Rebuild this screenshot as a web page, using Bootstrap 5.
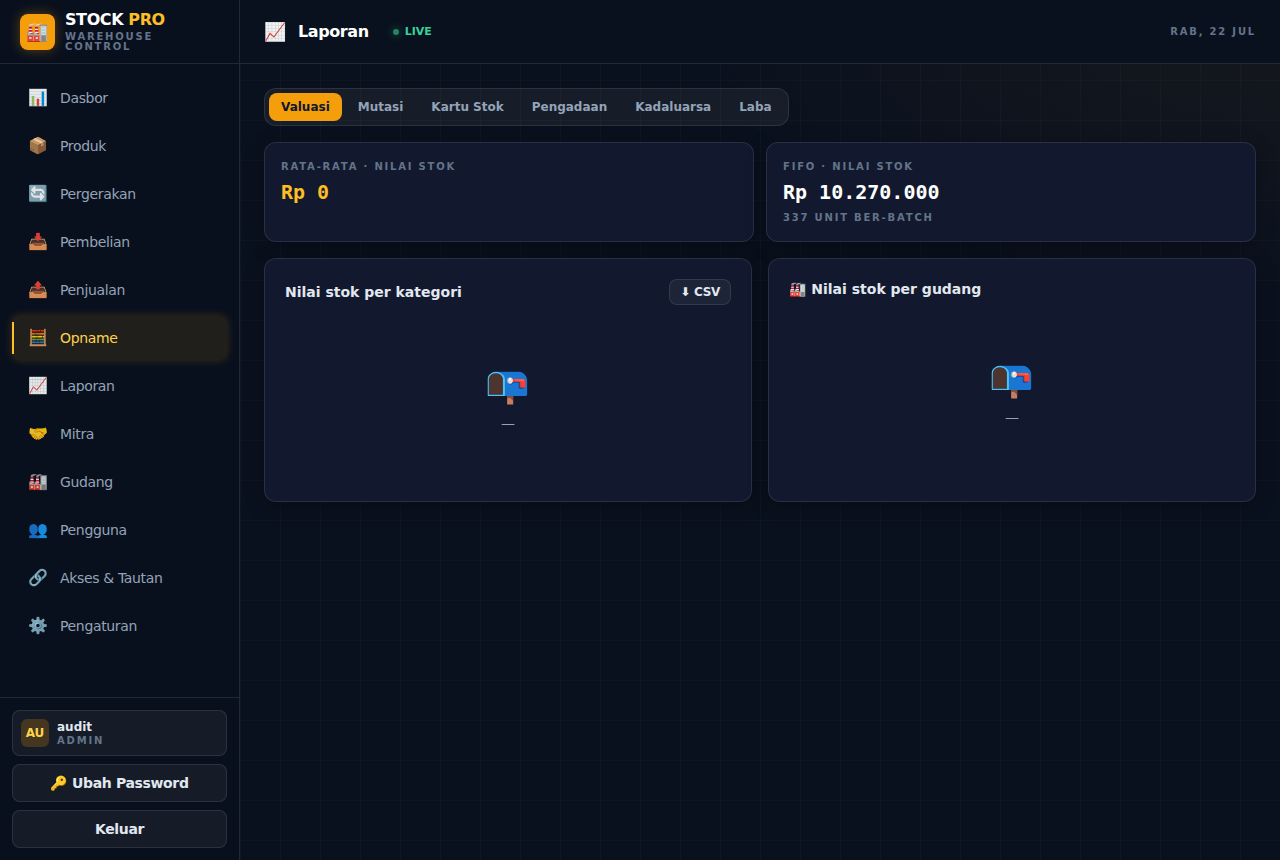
<!DOCTYPE html>
<html lang="id" data-bs-theme="dark">
<head>
<meta charset="utf-8">
<meta name="viewport" content="width=device-width, initial-scale=1">
<title>Laporan · Stock Pro</title>
<link rel="stylesheet" href="https://cdn.jsdelivr.net/npm/bootstrap@5.3.0/dist/css/bootstrap.min.css">
<style>
  :root {
    --line: rgba(255, 255, 255, .1);
    --glass: rgba(255, 255, 255, .05);
    --muted: #64748b;
    --soft: #94a3b8;
    --text: #e2e8f0;
    --amber: #f59e0b;
    --amber-light: #fbbf24;
  }
  body {
    font-family: "DejaVu Sans", "Noto Color Emoji", sans-serif;
    font-size: 14px;
    line-height: 20px;
    color: var(--text);
    background-color: #0a111e;
    background-image:
      linear-gradient(rgba(255, 255, 255, .02) 1px, transparent 1px),
      linear-gradient(90deg, rgba(255, 255, 255, .02) 1px, transparent 1px),
      radial-gradient(600px 300px at 100% 0, rgba(245, 158, 11, .05), transparent);
    background-size: 40px 40px, 40px 40px, auto;
  }
  .sidebar { width: 240px; background: #09101d; border-right: 1px solid var(--line); }
  .brand { height: 64px; padding: 0 20px; gap: 10px; border-bottom: 1px solid var(--line); }
  .brand-logo {
    width: 35px; height: 36px; border-radius: 8px; background: var(--amber);
    font-size: 18px; box-shadow: 0 0 12px rgba(245, 158, 11, .35);
  }
  .brand-name { font-size: 16px; line-height: 16px; font-weight: 700; color: #fff; letter-spacing: -.025em; }
  .brand-name span { color: var(--amber-light); }
  .eyebrow { font-size: 10px; line-height: 16px; font-weight: 700; letter-spacing: .18em; text-transform: uppercase; color: var(--muted); }
  .brand .eyebrow { line-height: 10px; margin-top: 4px; }
  .menu { padding: 12px; gap: 4px; }
  .menu .nav-link {
    display: flex; align-items: center; gap: 12px; height: 44px; padding: 0 16px;
    border-radius: 8px; color: var(--soft); position: relative; letter-spacing: -.025em;
  }
  .menu .nav-link.active { color: #fcd34d; background: #211f1c; box-shadow: 0 0 8px rgba(245, 158, 11, .22); }
  .menu .nav-link.active::before {
    content: ""; position: absolute; left: 0; top: 6px; bottom: 6px; width: 2px; background: var(--amber-light);
  }
  .menu-icon { width: 20px; font-size: 16px; line-height: 20px; text-align: center; opacity: .9; }
  .account { padding: 12px; gap: 8px; border-top: 1px solid var(--line); }
  .user-box { height: 46px; padding: 0 8px; gap: 8px; border: 1px solid var(--line); border-radius: 8px; background: var(--glass); }
  .avatar { width: 28px; height: 28px; border-radius: 6px; background: #44361f; color: #fcd34d; font-size: 12px; font-weight: 700; }
  .user-name { font-size: 12px; line-height: 14px; font-weight: 700; }
  .user-box .eyebrow { line-height: 13px; }
  .btn-glass {
    --bs-btn-color: var(--text); --bs-btn-bg: rgba(255, 255, 255, .05); --bs-btn-border-color: rgba(255, 255, 255, .1);
    --bs-btn-hover-color: #fff; --bs-btn-hover-bg: rgba(255, 255, 255, .1); --bs-btn-hover-border-color: rgba(255, 255, 255, .2);
    --bs-btn-font-size: 14px; --bs-btn-font-weight: 700; --bs-btn-line-height: 20px;
    --bs-btn-padding-y: 8px; --bs-btn-padding-x: 16px; --bs-btn-border-radius: 8px;
    letter-spacing: -.025em;
  }
  .btn-csv { --bs-btn-font-size: 12px; --bs-btn-line-height: 16px; --bs-btn-padding-y: 4px; --bs-btn-padding-x: 10px; }
  .topbar { height: 64px; padding: 0 24px; background: #0a111e; border-bottom: 1px solid var(--line); }
  .topbar h1 { font-size: 16px; line-height: 24px; font-weight: 700; color: #fff; margin: 0; letter-spacing: -.025em; }
  .topbar-icon { font-size: 18px; line-height: 24px; width: 22px; opacity: .95; }
  .live { color: #34d399; font-size: 11px; line-height: 16px; font-weight: 700; gap: 6px; }
  .live-dot { width: 6px; height: 6px; border-radius: 50%; background: #238562; box-shadow: 0 0 8px rgba(16, 185, 129, .6); }
  .content { padding: 24px; gap: 16px; }
  .tabs { padding: 4px; gap: 4px; border: 1px solid var(--line); border-radius: 12px; background: var(--glass); }
  .tabs .nav-link { padding: 6px 12px; border: 0; border-radius: 8px; background: transparent; font-size: 12px; line-height: 16px; font-weight: 700; color: var(--soft); }
  .tabs .nav-link.active { background: var(--amber); color: #0f172a; }
  .panel { background: #12192e; border: 1px solid var(--line); border-radius: 12px; box-shadow: 0 4px 20px rgba(0, 0, 0, .3); }
  .stats { --bs-gutter-x: 12px; }
  .panels { --bs-gutter-x: 16px; }
  .stat-box { padding: 16px 16px 15px; }
  .stat-value { font-family: "DejaVu Sans Mono", monospace; font-size: 20px; line-height: 28px; font-weight: 700; color: #fff; margin: 3px 0 4px; }
  .stat-value.accent { color: var(--amber-light); }
  .chart-box { padding: 20px; min-height: 244px; }
  .chart-box h2 { font-size: 14px; line-height: 20px; font-weight: 700; margin: 0; color: var(--text); }
  .empty { padding: 60px 0 48px; color: var(--soft); }
  .empty-icon { font-size: 36px; line-height: 40px; margin-bottom: 8px; }
</style>
</head>
<body>
<div class="d-flex min-vh-100">
  <aside class="sidebar d-flex flex-column flex-shrink-0">
    <div class="brand d-flex align-items-center">
      <div class="brand-logo d-flex align-items-center justify-content-center flex-shrink-0">🏭</div>
      <div>
        <div class="brand-name">STOCK <span>PRO</span></div>
        <div class="eyebrow">Warehouse Control</div>
      </div>
    </div>
    <nav class="menu nav flex-column flex-nowrap flex-grow-1" aria-label="Menu utama">
      <a class="nav-link" href="#"><span class="menu-icon">📊</span>Dasbor</a>
      <a class="nav-link" href="#"><span class="menu-icon">📦</span>Produk</a>
      <a class="nav-link" href="#"><span class="menu-icon">🔄</span>Pergerakan</a>
      <a class="nav-link" href="#"><span class="menu-icon">📥</span>Pembelian</a>
      <a class="nav-link" href="#"><span class="menu-icon">📤</span>Penjualan</a>
      <a class="nav-link active" href="#"><span class="menu-icon">🧮</span>Opname</a>
      <a class="nav-link" href="#"><span class="menu-icon">📈</span>Laporan</a>
      <a class="nav-link" href="#"><span class="menu-icon">🤝</span>Mitra</a>
      <a class="nav-link" href="#"><span class="menu-icon">🏭</span>Gudang</a>
      <a class="nav-link" href="#"><span class="menu-icon">👥</span>Pengguna</a>
      <a class="nav-link" href="#"><span class="menu-icon">🔗</span>Akses &amp; Tautan</a>
      <a class="nav-link" href="#"><span class="menu-icon">⚙️</span>Pengaturan</a>
    </nav>
    <div class="account d-flex flex-column">
      <div class="user-box d-flex align-items-center">
        <div class="avatar d-flex align-items-center justify-content-center">AU</div>
        <div>
          <div class="user-name">audit</div>
          <div class="eyebrow">Admin</div>
        </div>
      </div>
      <button type="button" class="btn btn-glass w-100">🔑 Ubah Password</button>
      <button type="button" class="btn btn-glass w-100">Keluar</button>
    </div>
  </aside>

  <div class="flex-grow-1 d-flex flex-column">
    <header class="topbar d-flex align-items-center">
      <span class="topbar-icon me-2 pe-1">📈</span>
      <h1 class="ms-1">Laporan</h1>
      <div class="live d-flex align-items-center ms-4"><span class="live-dot"></span>LIVE</div>
      <div class="eyebrow ms-auto">Rab, 22 Jul</div>
    </header>
    <main class="content d-flex flex-column">
      <div class="tabs nav align-self-start" role="tablist">
        <button type="button" class="nav-link active" role="tab" aria-selected="true">Valuasi</button>
        <button type="button" class="nav-link" role="tab" aria-selected="false">Mutasi</button>
        <button type="button" class="nav-link" role="tab" aria-selected="false">Kartu Stok</button>
        <button type="button" class="nav-link" role="tab" aria-selected="false">Pengadaan</button>
        <button type="button" class="nav-link" role="tab" aria-selected="false">Kadaluarsa</button>
        <button type="button" class="nav-link" role="tab" aria-selected="false">Laba</button>
      </div>
      <div class="row stats">
        <div class="col-6">
          <div class="panel stat-box h-100">
            <div class="eyebrow">Rata-rata · Nilai stok</div>
            <div class="stat-value accent">Rp 0</div>
          </div>
        </div>
        <div class="col-6">
          <div class="panel stat-box h-100">
            <div class="eyebrow">FIFO · Nilai stok</div>
            <div class="stat-value">Rp 10.270.000</div>
            <div class="eyebrow">337 unit ber-batch</div>
          </div>
        </div>
      </div>
      <div class="row panels">
        <div class="col-6">
          <section class="panel chart-box h-100">
            <div class="d-flex align-items-center justify-content-between">
              <h2>Nilai stok per kategori</h2>
              <button type="button" class="btn btn-glass btn-csv">⬇ CSV</button>
            </div>
            <div class="empty text-center">
              <div class="empty-icon">📭</div>
              <div>—</div>
            </div>
          </section>
        </div>
        <div class="col-6">
          <section class="panel chart-box h-100">
            <h2>🏭 Nilai stok per gudang</h2>
            <div class="empty text-center">
              <div class="empty-icon">📭</div>
              <div>—</div>
            </div>
          </section>
        </div>
      </div>
    </main>
  </div>
</div>
<script src="https://cdn.jsdelivr.net/npm/bootstrap@5.3.0/dist/js/bootstrap.bundle.min.js"></script>
</body>
</html>
